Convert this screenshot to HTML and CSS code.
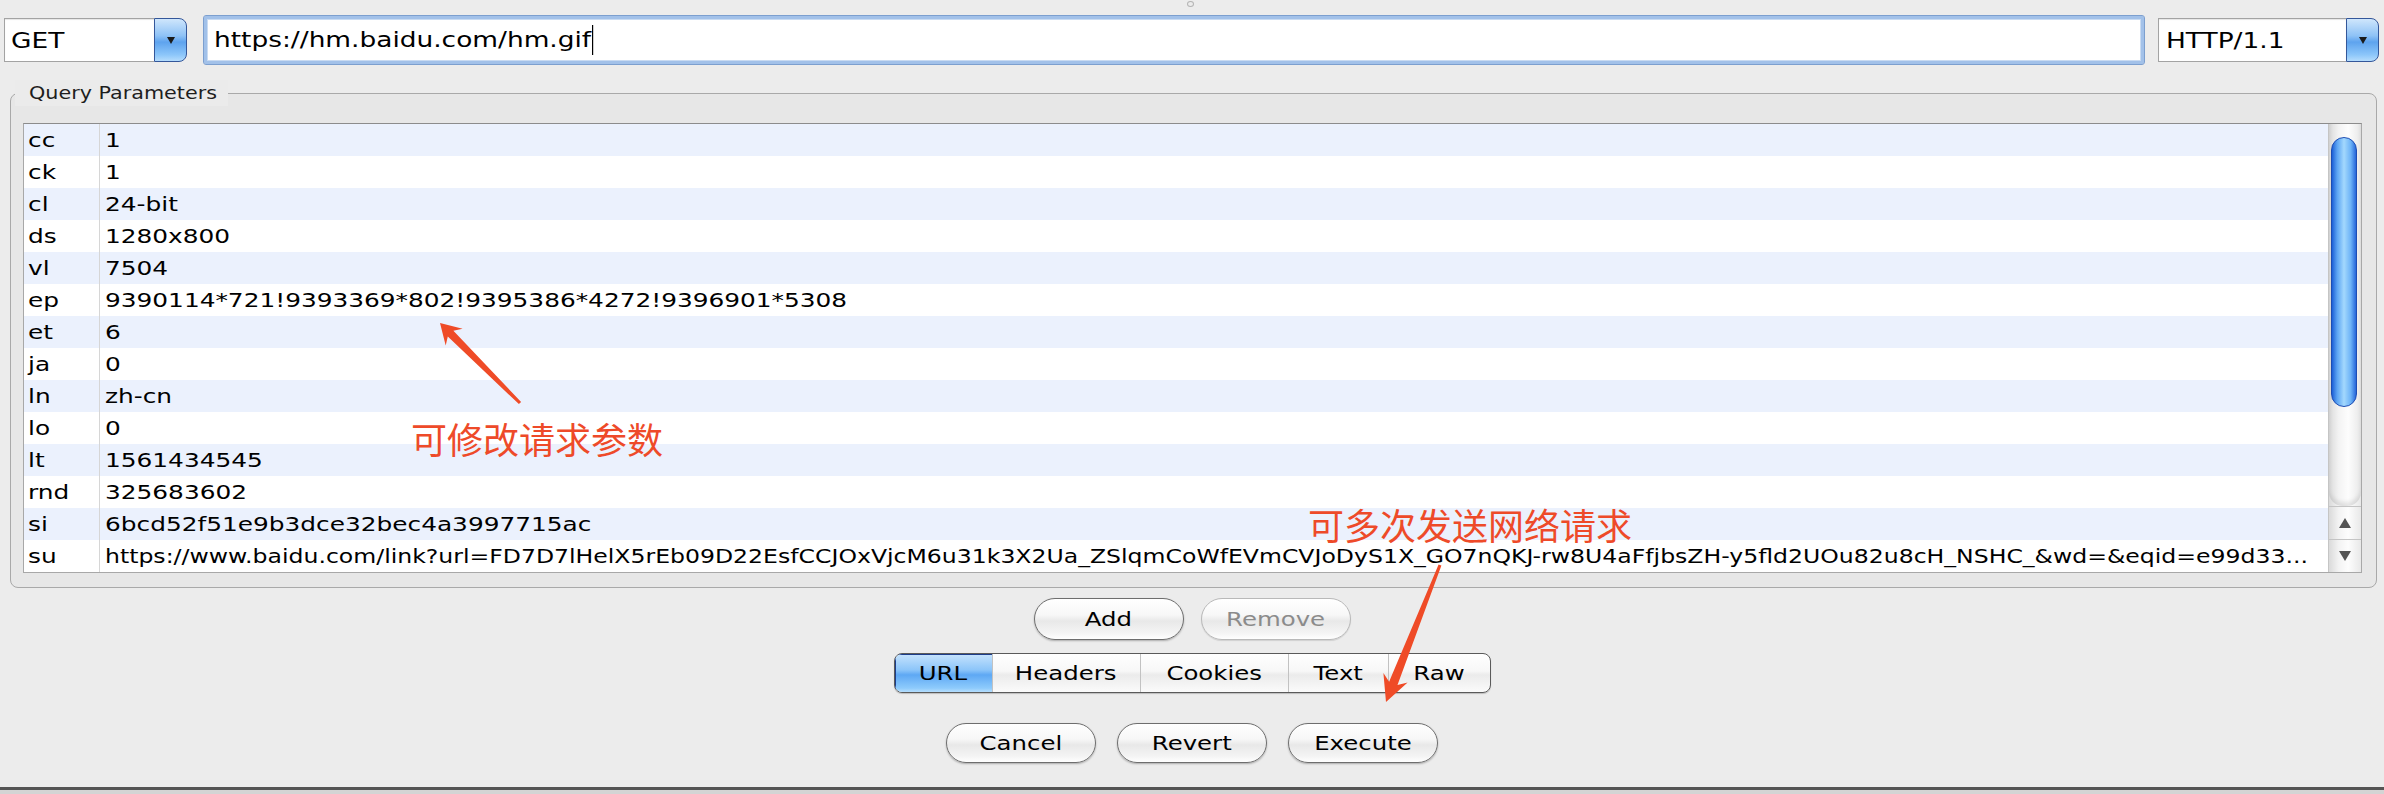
FILE: index.html
```html
<!DOCTYPE html>
<html>
<head>
<meta charset="utf-8">
<title>Request Editor</title>
<link rel="stylesheet" href="styles.css">
</head>
<body>
<div class="window">
  <div class="grip"></div>
  <div class="toolbar">
    <div class="combo combo-method">
      <span class="combo-value"><span class="t">GET</span></span>
      <span class="combo-btn"></span>
    </div>
    <div class="urlfield"><span class="t caret">https://hm.baidu.com/hm.gif</span></div>
    <div class="combo combo-proto">
      <span class="combo-value"><span class="t">HTTP/1.1</span></span>
      <span class="combo-btn"></span>
    </div>
  </div>

  <fieldset class="group">
    <legend class="group-title"><span class="t">Query Parameters</span></legend>
    <div class="table">
      <div class="rows">
        <div class="row"><div class="k"><span class="t">cc</span></div><div class="v"><span class="t">1</span></div></div>
        <div class="row"><div class="k"><span class="t">ck</span></div><div class="v"><span class="t">1</span></div></div>
        <div class="row"><div class="k"><span class="t">cl</span></div><div class="v"><span class="t">24-bit</span></div></div>
        <div class="row"><div class="k"><span class="t">ds</span></div><div class="v"><span class="t">1280x800</span></div></div>
        <div class="row"><div class="k"><span class="t">vl</span></div><div class="v"><span class="t">7504</span></div></div>
        <div class="row"><div class="k"><span class="t">ep</span></div><div class="v"><span class="t">9390114*721!9393369*802!9395386*4272!9396901*5308</span></div></div>
        <div class="row"><div class="k"><span class="t">et</span></div><div class="v"><span class="t">6</span></div></div>
        <div class="row"><div class="k"><span class="t">ja</span></div><div class="v"><span class="t">0</span></div></div>
        <div class="row"><div class="k"><span class="t">ln</span></div><div class="v"><span class="t">zh-cn</span></div></div>
        <div class="row"><div class="k"><span class="t">lo</span></div><div class="v"><span class="t">0</span></div></div>
        <div class="row"><div class="k"><span class="t">lt</span></div><div class="v"><span class="t">1561434545</span></div></div>
        <div class="row"><div class="k"><span class="t">rnd</span></div><div class="v"><span class="t">325683602</span></div></div>
        <div class="row"><div class="k"><span class="t">si</span></div><div class="v"><span class="t">6bcd52f51e9b3dce32bec4a3997715ac</span></div></div>
        <div class="row"><div class="k"><span class="t">su</span></div><div class="v"><span class="t long">https://www.baidu.com/link?url=FD7D7lHelX5rEb09D22EsfCCJOxVjcM6u31k3X2Ua_ZSlqmCoWfEVmCVJoDyS1X_GO7nQKJ-rw8U4aFfjbsZH-y5fld2UOu82u8cH_NSHC_&amp;wd=&amp;eqid=e99d33...</span></div></div>
      </div>
      <div class="vscroll">
        <div class="track"><div class="thumb"></div></div>
        <div class="arrow arrow-up"></div>
        <div class="arrow arrow-down"></div>
      </div>
    </div>
  </fieldset>

  <div class="btnrow btnrow-edit">
    <button class="pill"><span class="t">Add</span></button>
    <button class="pill disabled"><span class="t">Remove</span></button>
  </div>

  <div class="seg">
    <div class="seg-item seg-url active"><span class="t">URL</span></div>
    <div class="seg-item seg-headers"><span class="t">Headers</span></div>
    <div class="seg-item seg-cookies"><span class="t">Cookies</span></div>
    <div class="seg-item seg-text"><span class="t">Text</span></div>
    <div class="seg-item seg-raw"><span class="t">Raw</span></div>
  </div>

  <div class="btnrow btnrow-actions">
    <button class="pill pill-sm"><span class="t">Cancel</span></button>
    <button class="pill pill-sm"><span class="t">Revert</span></button>
    <button class="pill pill-sm"><span class="t">Execute</span></button>
  </div>

  <div class="statusline"></div>

  <svg class="overlay" width="2384" height="794" viewBox="0 0 2384 794">
    <polygon class="arrow-shape" points="440,323 462.6,328.7 453.4,330.8 521.1,401.9 518.9,404.1 447.8,336.4 445.7,345.6"/>
    <polygon class="arrow-shape" points="1386,702 1383.4,673.0 1389.1,681.7 1438.6,564.4 1441.4,565.6 1397.5,685.0 1407.6,682.6"/>
  </svg>
  <div class="note note-params">可修改请求参数</div>
  <div class="note note-send">可多次发送网络请求</div>
</div>
</body>
</html>
```

FILE: styles.css
```css
* { box-sizing: border-box; }
html, body { margin: 0; padding: 0; }
body {
  width: 2384px;
  height: 794px;
  overflow: hidden;
  background: #ececec;
  font-family: "DejaVu Sans", "Liberation Sans", sans-serif;
  color: #000;
}
.window {
  position: relative;
  width: 2384px;
  height: 794px;
  display: flex;
  flex-direction: column;
}
.t {
  display: inline-block;
  white-space: pre;
  transform: scaleX(var(--sx, 1.2));
  transform-origin: 0 50%;
}

/* small drag mark at the top centre */
.grip {
  position: absolute;
  left: 1187px;
  top: 1px;
  width: 7px;
  height: 6px;
  border-radius: 50%;
  border: 1px solid #b4b4b4;
}

/* ---------- toolbar ---------- */
.toolbar {
  display: flex;
  align-items: center;
  height: 65px;
  padding: 15px 5px 0 4px;
  flex: none;
}
.combo {
  display: flex;
  height: 44px;
  flex: none;
}
.combo-method { width: 183px; }
.combo-proto { width: 221px; margin-left: 13px; }
.combo-value {
  flex: 1;
  display: flex;
  align-items: center;
  background: #fff;
  border: 1px solid #a3a3a3;
  border-right: none;
  box-shadow: inset 0 1px 1px rgba(0,0,0,0.10);
  padding-left: 6px;
  font-size: 22px;
  --sx: 1.2;
}
.combo-proto .combo-value { padding-left: 7px; }
.combo-btn {
  width: 33px;
  display: flex;
  align-items: center;
  justify-content: center;
  border: 1px solid #34579a;
  border-radius: 0 8px 8px 0;
  background: linear-gradient(#cfe6fc, #8ec2f6 40%, #5ea3ee 55%, #8cc6fa 85%, #b5dcfd);
}
.combo-btn::after {
  content: "";
  border-left: 4px solid transparent;
  border-right: 4px solid transparent;
  border-top: 7px solid #1a1a1a;
}
.urlfield {
  flex: 1;
  height: 50px;
  margin-left: 16px;
  display: flex;
  align-items: center;
  background: #fff;
  border: 1px solid #7c9fcf;
  border-radius: 3px;
  box-shadow: inset 0 0 0 3px #a2c1e9, inset 0 0 0 4px #c9dbf2;
  padding-left: 10px;
  font-size: 22px;
  --sx: 1.2;
}
.caret::after {
  content: "";
  display: inline-block;
  width: 1px;
  height: 30px;
  margin-left: 1px;
  vertical-align: -8px;
  background: #000;
}

/* ---------- group ---------- */
.group {
  margin: 15px 7px 0 10px;
  padding: 17px 14px 14px 12px;
  min-width: 0;
  border: 1px solid #a9a9a9;
  border-radius: 8px;
  background: #e7e7e7;
  flex: none;
}
.group-title {
  margin-left: -8px;
  padding: 2px 36px 2px 14px;
  font-size: 18px;
  line-height: 22px;
  color: #1e1e1e;
  background: #ebebeb;
  --sx: 1.15;
}
.table {
  display: flex;
  height: 450px;
  border: 1px solid #a8a8a8;
  border-top-color: #8c8c8c;
  background: #fff;
}
.rows {
  flex: 1;
  display: flex;
  flex-direction: column;
  overflow: hidden;
}
.row {
  display: flex;
  height: 32px;
  flex: none;
  font-size: 20px;
  --sx: 1.24;
}
.row:nth-child(odd) { background: #ebf1fd; }
.k {
  width: 76px;
  flex: none;
  display: flex;
  align-items: center;
  padding-left: 4px;
  border-right: 1px solid #d6d6d6;
}
.v {
  flex: 1;
  display: flex;
  align-items: center;
  padding-left: 5px;
  overflow: hidden;
}
.v .long { --sx: 1.178; }

/* ---------- scrollbar ---------- */
.vscroll {
  width: 33px;
  flex: none;
  display: flex;
  flex-direction: column;
  border-left: 1px solid #c5c5c5;
  background: linear-gradient(to right, #dadada, #f3f3f3 30%, #fdfdfd 60%, #e8e8e8);
}
.track {
  flex: 1;
  padding: 13px 4px 0 2px;
  border-radius: 0 0 14px 14px;
  box-shadow: inset 0 -4px 4px rgba(0,0,0,0.10);
}
.thumb {
  height: 270px;
  border-radius: 13px;
  border: 1px solid #1c4db4;
  background: linear-gradient(to right, #1c5fd6, #5da5f3 22%, #a3d8fd 50%, #6db3f7 78%, #2566d9);
}
.arrow {
  height: 33px;
  flex: none;
  display: flex;
  align-items: center;
  justify-content: center;
  border-top: 1px solid #c4c4c4;
}
.arrow-up::after {
  content: "";
  border-left: 6px solid transparent;
  border-right: 6px solid transparent;
  border-bottom: 10px solid #555;
}
.arrow-down::after {
  content: "";
  border-left: 6px solid transparent;
  border-right: 6px solid transparent;
  border-top: 10px solid #555;
}

/* ---------- buttons ---------- */
.btnrow {
  display: flex;
  justify-content: center;
  flex: none;
}
.btnrow-edit { gap: 17px; margin-top: 10px; }
.btnrow-actions { gap: 21px; margin-top: 30px; }
.pill {
  width: 150px;
  height: 42px;
  padding: 0;
  display: flex;
  align-items: center;
  justify-content: center;
  border: 1px solid #6e6e6e;
  border-radius: 21px;
  background: linear-gradient(#ffffff, #f7f7f7 40%, #e8e8e8 55%, #f4f4f4 85%, #ffffff);
  box-shadow: 0 1px 2px rgba(0,0,0,0.28);
  font-family: "DejaVu Sans", "Liberation Sans", sans-serif;
  font-size: 20px;
  color: #000;
  --sx: 1.22;
}
.pill .t, .seg-item .t { transform-origin: 50% 50%; }
.pill-sm { height: 40px; border-radius: 20px; }
.pill.disabled {
  border-color: #b9b9b9;
  color: #8b8b8b;
  box-shadow: 0 1px 1px rgba(0,0,0,0.12);
}

/* ---------- segmented ---------- */
.seg {
  display: flex;
  align-self: center;
  height: 40px;
  margin-top: 13px;
  border: 1px solid #5a5a5a;
  border-radius: 8px;
  overflow: hidden;
  background: linear-gradient(#ffffff, #f7f7f7 45%, #ebebeb 55%, #fbfbfb);
  box-shadow: 0 1px 1px rgba(0,0,0,0.2);
  flex: none;
}
.seg-item {
  display: flex;
  align-items: center;
  justify-content: center;
  font-size: 20px;
  border-left: 1px solid #c2c2c2;
  --sx: 1.22;
}
.seg-item:first-child { border-left: none; }
.seg-url { width: 97px; }
.seg-headers { width: 148px; }
.seg-cookies { width: 148px; }
.seg-text { width: 100px; }
.seg-raw { width: 102px; }
.seg-item.active {
  background: linear-gradient(#c6e3fd, #8cc5f9 42%, #5ea8f4 55%, #8ecbfc 90%, #b6defd);
  box-shadow: inset 1px 1px 0 #1d3d8a;
}

/* ---------- bottom ---------- */
.statusline {
  margin-top: 24px;
  height: 7px;
  flex: none;
  border-top: 3px solid #545454;
  background: #d4d4d4;
}

/* ---------- annotations ---------- */
.overlay {
  position: absolute;
  left: 0;
  top: 0;
  pointer-events: none;
}
.arrow-shape { fill: #ef4b27; }
.note {
  position: absolute;
  font-family: "Noto Sans CJK SC", sans-serif;
  font-size: 36px;
  line-height: 36px;
  color: #ee4a29;
  white-space: nowrap;
}
.note-params { left: 411px; top: 420px; }
.note-send { left: 1308px; top: 506px; }
```
